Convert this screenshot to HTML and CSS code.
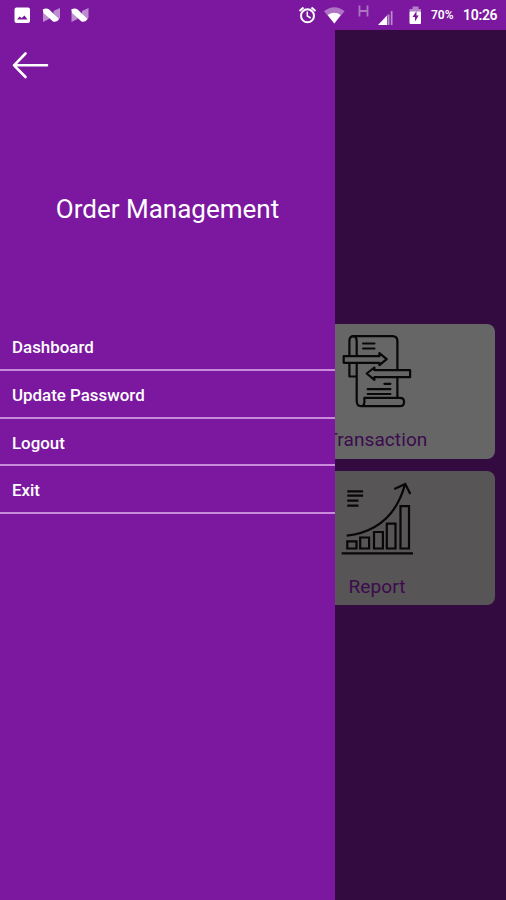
FILE: index.html
```html
<!DOCTYPE html>
<html lang="en">
<head>
    <meta charset="UTF-8">
    <meta name="viewport" content="width=device-width, initial-scale=1.0">
    <title>Order Management</title>
    <link rel="stylesheet" href="styles.css">
</head>
<body>
    <header class="status-bar">
        <svg class="status-left" width="110" height="30" viewBox="0 0 110 30">
            <rect x="14.5" y="7.5" width="15.5" height="15.5" rx="2" fill="#fff"/>
            <path d="M17 19.5l2.500-3 2.200 1.500 2.800-2.500 3 4z" fill="#7b189f"/>
            <g id="nIcon">
                <path d="M43 12l6 3v4l-6 3zM53.500 11l6.500-3v10l-2 2-4.500-4z" fill="#fff" opacity=".5"/>
                <path d="M42.700 9.500q3.500-2 6.500 0l9.800 9.500q-1.500 3.500-6 2.500L43.500 13z" fill="#fff"/>
            </g>
            <use href="#nIcon" x="28.500"/>
        </svg>
        <div class="status-right">
            <svg width="134" height="30" viewBox="0 0 134 30">
                <!-- alarm -->
                <g fill="none" stroke="#fff" stroke-width="2">
                    <circle cx="17.500" cy="15.800" r="6.500"/>
                    <path d="M9.500 11l4-3.500M25.500 11l-4-3.500"/>
                    <path d="M17.300 11.500v4.500l3.400 2" stroke-width="1.500"/>
                </g>
                <!-- wifi -->
                <path d="M34 11.300q10.300-8.300 20.600 0L44.300 23.500z" fill="#fff" opacity=".4"/>
                <path d="M37.700 15q6.600-4.500 13 0L44.300 23.500z" fill="#fff"/>
                <!-- signal -->
                <path d="M69.500 5.500v11M77.500 5.500v11M69.500 11h8" stroke="#fff" stroke-width="1.800" opacity=".4"/>
                <path d="M88 25l9-9.500V25z" fill="#fff"/>
                <path d="M97.500 14.500h2V25h-2zM100.800 11h1.700v14h-1.700z" fill="#fff" opacity=".5"/>
                <!-- battery -->
                <path d="M119.500 12V9h3V6.500h6V9h2.500v3z" fill="#fff" opacity=".45"/>
                <rect x="119.500" y="11.500" width="11.500" height="12.500" rx="1" fill="#fff"/>
                <path d="M126.500 11l-4 6h2.500v4.500l3.700-6h-2.200z" fill="#7b189f"/>
            </svg>
            <span class="battery-text">70%</span>
            <span class="clock">10:26</span>
        </div>
    </header>

    <main class="screen">
        <section class="dashboard">
            <div class="card transaction">
                <svg class="card-icon" width="72" height="76" viewBox="0.6 0.5 72 76" fill="none" stroke="#080808" stroke-width="2.200" stroke-linejoin="round" stroke-linecap="round">
                    <path d="M9 22V7.500q0-4.800 4.500-4.800H52q5 0 5 5V36M57 44v20"/>
                    <path d="M12.500 2.700q3.800 0 3.800 5V22M9 30v13h7M16.300 30v37q0 5.700 4.200 5.700 3.500 0 3.500-4.200v-4.200h35.500q4.200 0 4.200 4.200t-4.200 4.200h-39"/>
                    <path d="M22.700 10H34M22.700 15H34M44 50.300h6M27.300 55.700H50M27.300 60.500H50"/>
                    <path d="M3.300 22.700H39v-3l7.300 6-7.300 6v-2.400H3.300zM69.700 36.700H34V34l-7.700 6 7.700 6.300v-2.600h35.700z"/>
                </svg>
                <span class="card-label">Transaction</span>
            </div>
            <div class="card report">
                <svg class="card-icon" width="72" height="76" viewBox="0 0 72 76" fill="none" stroke="#080808" stroke-width="2.200">
                    <path d="M6.300 10.300h15.800M6.300 14.700h15.800M6.300 19.700h11.200M6.300 24.700h11.200"/>
                    <path d="M5.700 54.700C37 51 56 33 64 3.300M53.300 8L64.300 3l5 10"/>
                    <path d="M6.300 60.300h9.200v7.200H6.300zM19.200 56.500h8.900v11h-8.900zM33 51h8.900v16.500H33zM45.800 42.700h8.700v24.800h-8.700zM59.500 25.200H68v42.300h-8.500z"/>
                    <path d="M.7 72.300H72"/>
                </svg>
                <span class="card-label">Report</span>
            </div>
        </section>

        <nav class="drawer">
            <svg class="back" width="40" height="30" viewBox="0 0 40 30" fill="none" stroke="#fff" stroke-width="2.600" stroke-linecap="round" stroke-linejoin="round">
                <path d="M13.500 3.500L2 15.300l11.500 11.700M2 15.300h33"/>
            </svg>
            <h1 class="title">Order Management</h1>
            <ul class="menu">
                <li>Dashboard</li>
                <li>Update Password</li>
                <li>Logout</li>
                <li>Exit</li>
            </ul>
        </nav>
    </main>
</body>
</html>
```
FILE: styles.css
```css
* {
    box-sizing: border-box;
}
body {
    margin: 0;
    height: 900px;
    overflow: hidden;
    font-family: Roboto, sans-serif;
    color: #fff;
    background: #330b40;
}
svg {
    display: block;
    flex-shrink: 0;
}
.status-bar {
    display: flex;
    justify-content: space-between;
    height: 30px;
    background: #7b189f;
}
.status-right {
    display: flex;
    align-items: center;
    width: 216px;
}
.battery-text {
    width: 30px;
    margin-left: 7px;
    font-size: 12px;
    font-weight: 600;
}
.clock {
    font-size: 14px;
    font-weight: 600;
    letter-spacing: -0.3px;
    margin-left: 2px;
}
.screen {
    position: relative;
    height: 870px;
}
.dashboard {
    display: flex;
    flex-direction: column;
    align-items: flex-end;
    gap: 12px;
    padding: 294px 11px 0 0;
}
.card {
    display: flex;
    flex-direction: column;
    align-items: center;
    width: 236px;
    height: 134.5px;
    padding-top: 10px;
    border-radius: 8px;
}
.transaction {
    background: #666;
}
.report {
    background: #575555;
}
.card-icon {
    margin-bottom: 18px;
}
.card-label {
    font-size: 19px;
    line-height: 24px;
    letter-spacing: 0.1px;
    color: #3b0b4e;
}
/* open menu lies over the dashboard */
.drawer {
    position: absolute;
    top: 0;
    left: 0;
    width: 335px;
    height: 100%;
    background: #7b189f;
}
.back {
    margin: 20px 0 0 12px;
}
.title {
    margin: 112px 0 0;
    font-size: 26px;
    font-weight: 400;
    line-height: 34px;
    text-align: center;
}
.menu {
    margin: 97.4px 0 0;
    padding: 0;
    list-style: none;
}
.menu li {
    height: 47.6px;
    padding-left: 12px;
    border-bottom: 2px solid #c88bdc;
    font-size: 16.9px;
    font-weight: 500;
    line-height: 49px;
}
```
